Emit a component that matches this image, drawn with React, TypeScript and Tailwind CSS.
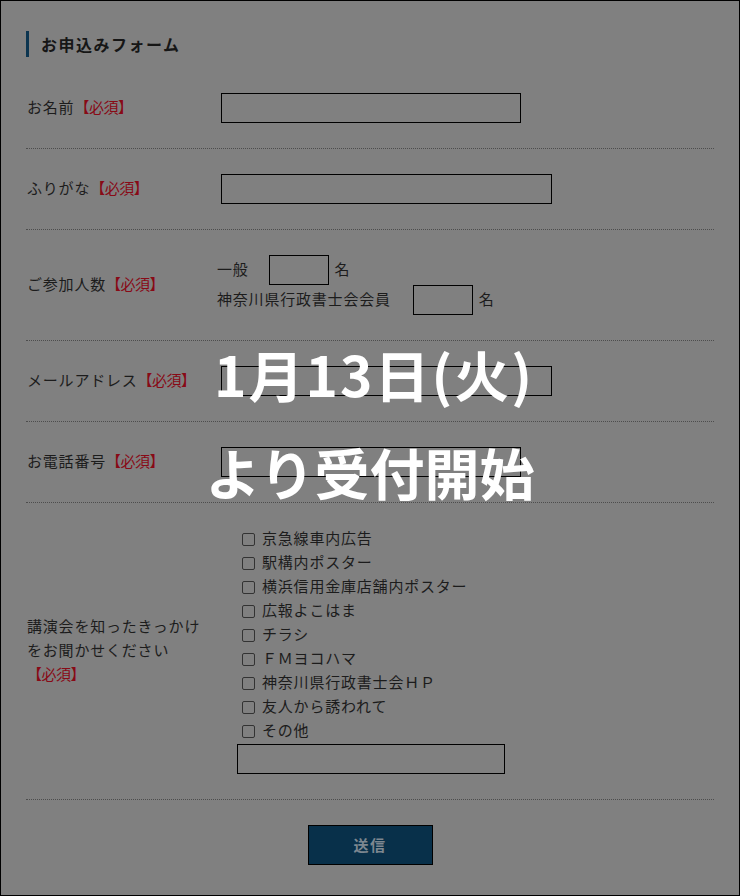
import React from "react";

const lab = "text-[15px] tracking-[0.8px] leading-[24px] text-[#1c1c1c]";

function Req() {
  return <span className="text-[15px] tracking-[-0.5px] text-[#880a16]">【必須】</span>;
}

function Row({ label, children, py = "py-[25px]" }: { label: React.ReactNode; children: React.ReactNode; py?: string }) {
  return (
    <div className={`flex items-center ${py} border-b border-dotted border-[#4d4d4d]`}>
      <div className={`w-[191px] shrink-0 pl-[1px] -mt-[2px] ${lab}`}>{label}</div>
      <div className="flex-1">{children}</div>
    </div>
  );
}

const inputCls = "block h-[30px] border border-black bg-transparent outline-none";

const sources = [
  "京急線車内広告",
  "駅構内ポスター",
  "横浜信用金庫店舗内ポスター",
  "広報よこはま",
  "チラシ",
  "ＦＭヨコハマ",
  "神奈川県行政書士会ＨＰ",
  "友人から誘われて",
  "その他",
];

export default function App() {
  return (
    <div className="relative w-[740px] h-[896px] border border-black bg-[#808080] font-['Noto_Sans_CJK_JP',sans-serif] overflow-hidden">
      <div className="px-[25px] pt-[30px]">
        <h2 className="flex items-center h-[26px] border-l-[3px] border-[#0c3550] pl-[12px] text-[16px] font-bold tracking-[1.5px] text-[#161616]">
          お申込みフォーム
        </h2>
        <div className="mt-[11px]">
          <Row label={<>お名前<Req /></>}>
            <input className={`${inputCls} ml-[4px] w-[300px]`} />
          </Row>
          <Row label={<>ふりがな<Req /></>}>
            <input className={`${inputCls} ml-[4px] w-[331px]`} />
          </Row>
          <Row label={<>ご参加人数<Req /></>}>
            <div className={lab}>
              <div className="flex items-center h-[30px]">
                <span className="-mt-[2px]">一般</span>
                <input className={`${inputCls} ml-[20px] w-[60px]`} />
                <span className="ml-[6px] -mt-[2px]">名</span>
              </div>
              <div className="flex items-center h-[30px]">
                <span className="-mt-[2px]">神奈川県行政書士会会員</span>
                <input className={`${inputCls} ml-[22px] w-[60px]`} />
                <span className="ml-[6px] -mt-[2px]">名</span>
              </div>
            </div>
          </Row>
          <Row label={<>メールアドレス<Req /></>}>
            <input className={`${inputCls} ml-[4px] w-[331px]`} />
          </Row>
          <Row label={<>お電話番号<Req /></>}>
            <input className={`${inputCls} ml-[4px] w-[300px]`} />
          </Row>
          <Row
            py="pt-[24px] pb-[25px]"
            label={
              <>
                講演会を知ったきっかけ
                <br />
                をお聞かせください
                <br />
                <Req />
              </>
            }
          >
            <div className="pl-[20px]">
              {sources.map((s) => (
                <label key={s} className={`flex items-center h-[24px] pl-[5px] gap-[7px] ${lab}`}>
                  <input
                    type="checkbox"
                    className="appearance-none w-[13px] h-[13px] border border-[#333333] rounded-[2px] bg-transparent"
                  />
                  <span className="-mt-[2px]">{s}</span>
                </label>
              ))}
              <input className={`${inputCls} mt-[1px] w-[268px]`} />
            </div>
          </Row>
        </div>
        <div className="flex justify-center pt-[25px]">
          <button className="w-[125px] h-[40px] border border-black bg-[#08304a] text-[15px] font-bold tracking-[1.5px] text-[#7d8790]">
            送信
          </button>
        </div>
      </div>

      <div className="absolute inset-x-0 top-[323px] text-center text-white font-bold text-[55px] leading-[98px]">
        <div className="tracking-[2px] pl-[8px]">1月13日(火)</div>
        <div>より受付開始</div>
      </div>
    </div>
  );
}
